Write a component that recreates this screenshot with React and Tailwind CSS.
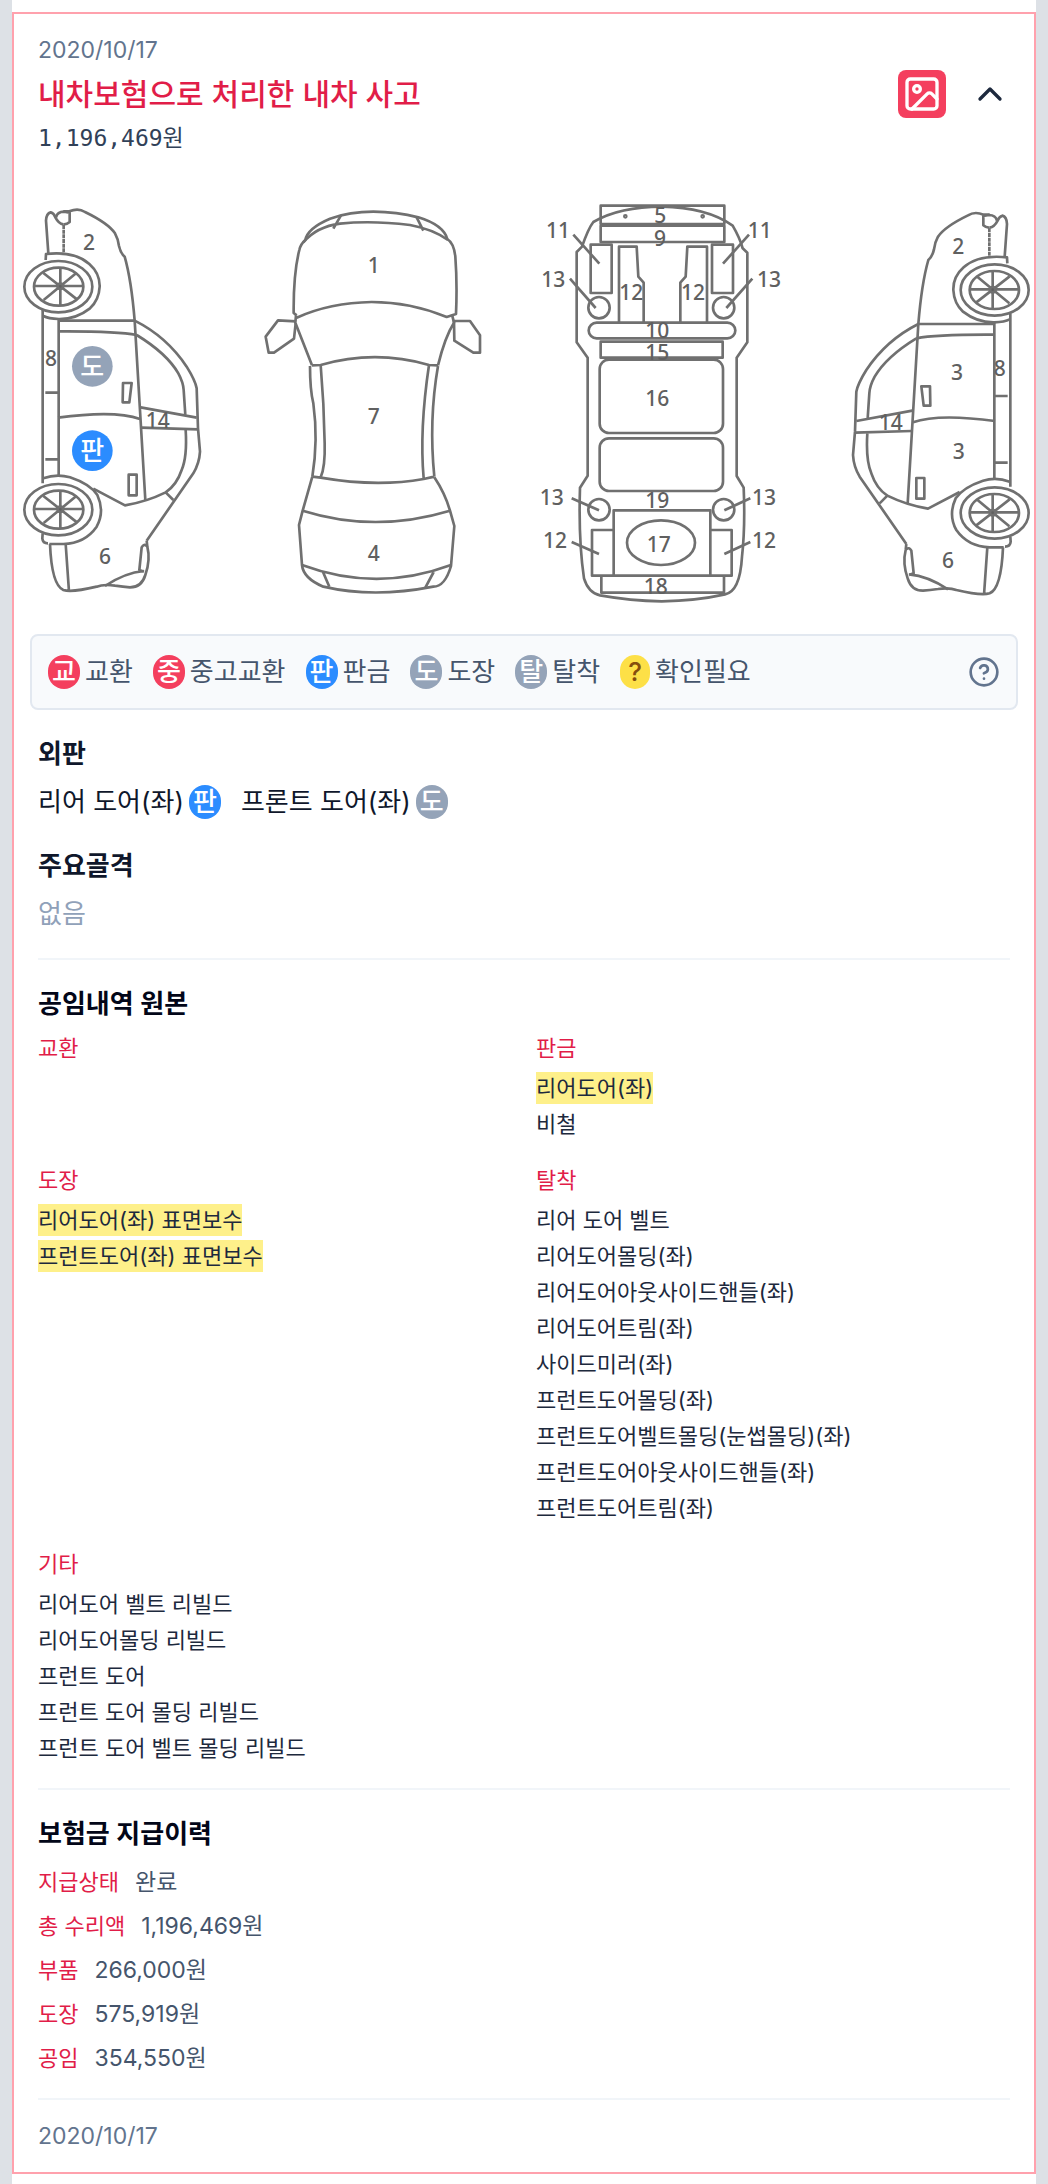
import { ChevronUp, CircleHelp, Image } from "lucide-react";

const legend = [
  ["교", "교환", "bg-[#f43f5e] text-white w-8"],
  ["중", "중고교환", "bg-[#f43f5e] text-white w-8"],
  ["판", "판금", "bg-[#2b8cff] text-white w-8"],
  ["도", "도장", "bg-[#94a3b8] text-white w-8"],
  ["탈", "탈착", "bg-[#94a3b8] text-white w-8"],
  ["?", "확인필요", "bg-[#fde047] text-[#854d0e] w-[30px]"],
];

const work = [
  { title: "교환", items: [] },
  { title: "판금", items: [["리어도어(좌)", true], ["비철"]] },
  { title: "도장", items: [["리어도어(좌) 표면보수", true], ["프런트도어(좌) 표면보수", true]] },
  {
    title: "탈착",
    items: [
      ["리어 도어 벨트"],
      ["리어도어몰딩(좌)"],
      ["리어도어아웃사이드핸들(좌)"],
      ["리어도어트림(좌)"],
      ["사이드미러(좌)"],
      ["프런트도어몰딩(좌)"],
      ["프런트도어벨트몰딩(눈썹몰딩)(좌)"],
      ["프런트도어아웃사이드핸들(좌)"],
      ["프런트도어트림(좌)"],
    ],
  },
  {
    title: "기타",
    items: [
      ["리어도어 벨트 리빌드"],
      ["리어도어몰딩 리빌드"],
      ["프런트 도어"],
      ["프런트 도어 몰딩 리빌드"],
      ["프런트 도어 벨트 몰딩 리빌드"],
    ],
  },
];

const payments = [
  ["지급상태", "완료"],
  ["총 수리액", "1,196,469원"],
  ["부품", "266,000원"],
  ["도장", "575,919원"],
  ["공임", "354,550원"],
];

function Badge({ children, tone }) {
  return (
    <span className={`inline-flex h-[34px] shrink-0 items-center justify-center rounded-full text-[26px] font-medium leading-[34px] ${tone}`}>
      {children}
    </span>
  );
}

function Labels({ items }) {
  return (
    <g fill="#606060" stroke="none" fontSize="63" fontWeight="500" textAnchor="middle" className="font-['Noto_Sans',sans-serif]">
      {items.map(([t, x, y], i) => (
        <text key={i} x={x} y={y}>{t}</text>
      ))}
    </g>
  );
}

function Wheel({ cy }) {
  return (
    <g>
      <ellipse cx="175" cy={cy} rx="102" ry="77" fill="#fff" />
      <ellipse cx="176" cy={cy} rx="74" ry="57" />
      <path d={`M102 ${cy - 2}H250M181 ${cy - 57}V${cy + 57}M130 ${cy - 41}L231 ${cy + 38}M229 ${cy - 41}L131 ${cy + 40}`} />
      <circle cx="181" cy={cy - 1} r="8" fill="#606060" />
    </g>
  );
}

function SideView() {
  return (
    <g>
      <path d="M145 190L138 92Q139 70 152 67Q162 70 166 82Q176 101 190 103" />
      <path d="M191 105V188" strokeDasharray="12 2" />
      <path d="M168 82Q172 65 192 65L209 68V96Q200 104 190 103" />
      <path d="M190 64L208 64Q235 53 255 66Q325 100 345 130Q355 148 357 168Q362 190 374 200Q394 270 404 392L436 930" />
      <path d="M137 210L138 192Q225 183 268 222Q300 250 299 290Q297 330 270 355Q228 388 176 387Q145 386 130 378" />
      <path d="M128 360V880M176 388V855M136 608H174M136 808H174" />
      <path d="M130 865Q170 850 210 862Q270 882 292 915Q315 965 290 1010Q255 1060 190 1062L148 1062M128 1030L127 1045Q128 1060 144 1060" />
      <Wheel cy={290} />
      <Wheel cy={959} />
      <path d="M176 392H404M176 424Q350 423 410 435M174 683Q345 660 420 687" />
      <path d="M404 392Q500 440 560 530Q586 572 590 595L594 715L600 785Q598 820 580 850L440 1052" />
      <path d="M410 435Q500 490 535 550Q550 578 551 600L556 675M422 652L590 683M424 713L594 718" />
      <path d="M557 720Q562 800 545 840Q530 885 497 907L520 930M497 907Q440 935 375 946L280 896" />
      <path d="M369 579H395L388 637H368ZM386 854H410V916H386Z" />
      <path d="M440 1052L442 1070Q452 1110 436 1155Q425 1192 390 1192Q370 1190 345 1187Q310 1182 290 1190Q215 1208 190 1200Q155 1185 150 1062M197 1062L207 1205" />
      <path d="M440 1068Q432 1060 425 1072L418 1140L432 1145M315 1188Q375 1148 432 1143" />
    </g>
  );
}

function TopView() {
  return (
    <g>
      <path d="M140 376L131 369Q130 250 148 180Q152 162 166 150Q172 115 240 86Q300 65 370 65Q440 66 505 82Q580 105 592 147Q612 160 616 200Q622 280 618 372L590 381Q480 336 365 336Q240 338 140 383" />
      <path d="M160 157Q200 110 270 101Q365 91 480 105Q550 118 594 150M273 76L250 116M500 82L520 122" />
      <path d="M138 376L136 398L186 526M606 374L612 398Q585 440 564 526M186 526L212 525Q375 478 537 525L564 526" />
      <path d="M138 394L84 391L47 440L56 488H72L132 446L137 400M612 393H660L690 436V488H670L613 452Z" />
      <path d="M180 528Q180 600 190 640Q205 750 187 860M212 525Q222 640 224 760Q226 830 212 862M564 528Q536 690 553 860M537 525Q508 720 521 865M187 860L212 863Q380 892 521 867L553 860" />
      <path d="M187 860L158 962L147 1005L156 1125Q160 1165 220 1190Q370 1225 550 1190Q585 1190 603 1128L613 1008L600 962Q585 910 553 862" />
      <path d="M158 962Q375 1030 600 962M156 1125Q380 1208 603 1125M219 1146L238 1190M551 1146L526 1193" />
      <Labels items={[["1", 371, 249], ["7", 371, 703], ["4", 371, 1113]]} />
    </g>
  );
}

function UnderView() {
  return (
    <g>
      <path d="M242 47H613V102H242ZM242 107H613V156H242ZM242 455H608V503H242Z" />
      <path d="M170 186L186 170Q205 115 220 96Q300 50 425 50Q560 52 638 107Q660 145 668 175L682 188V457L650 503V858L671 893Q676 1010 666 1100Q660 1205 615 1213Q530 1232 425 1234Q330 1232 240 1216Q205 1208 192 1165Q175 1050 180 893L203 857V503L170 457Z" />
      <path d="M212 164H275V309H212ZM576 164H639V309H576ZM297 398V170H350L355 260L371 278V398M481 398V278L497 260L502 170H561V398" />
      <circle cx="237" cy="353" r="32" />
      <circle cx="611" cy="353" r="32" />
      <circle cx="237" cy="959" r="32" />
      <circle cx="611" cy="959" r="32" />
      <rect x="206" y="398" width="440" height="47" rx="24" />
      <rect x="239" y="509" width="370" height="220" rx="28" />
      <rect x="239" y="745" width="370" height="158" rx="28" />
      <path d="M281 961H571V1157H281ZM281 1020H216V1157H281M571 1020H635V1157H571M244 1157V1208H612V1157" />
      <ellipse cx="423" cy="1058" rx="102" ry="67" />
      <path d="M160 134L238 221M687 134L609 221M150 266L227 354M697 266L619 354M155 925L237 961M691 925L613 961M155 1056L237 1092M691 1056L613 1092" />
      <circle cx="316" cy="79" r="3" />
      <circle cx="548" cy="79" r="3" />
      <Labels
        items={[
          ["5", 421, 99], ["9", 420, 168], ["11", 114, 144], ["11", 719, 144], ["13", 100, 291], ["13", 747, 291],
          ["12", 334, 329], ["12", 519, 329], ["10", 412, 444], ["15", 412, 510], ["16", 412, 649], ["19", 412, 955],
          ["17", 416, 1087], ["13", 95, 944], ["13", 732, 944], ["12", 105, 1075], ["12", 732, 1075], ["18", 407, 1212],
        ]}
      />
    </g>
  );
}

function CarDiagram() {
  return (
    <svg viewBox="42 0 3060 1260" className="block w-full" role="img" aria-label="차량 부위별 수리 내역" fill="none" stroke="#707070" strokeWidth="8" strokeLinejoin="round">
      <SideView />
      <Labels items={[["2", 267, 181], ["8", 153, 528], ["14", 473, 713], ["6", 315, 1123]]} />
      <g transform="translate(750 0)"><TopView /></g>
      <g transform="translate(1560 0)"><UnderView /></g>
      <g transform="translate(3159 10) scale(-1 1)"><SideView /></g>
      <g transform="translate(2400 0)">
        <Labels items={[["2", 475, 192], ["3", 471, 570], ["8", 599, 558], ["14", 272, 721], ["3", 476, 806], ["6", 444, 1133]]} />
      </g>
      <g stroke="none" fontSize="78" fontWeight="500" textAnchor="middle">
        <circle cx="277" cy="529" r="61" fill="#94a3b8" />
        <text x="277" y="558" fill="#fff">도</text>
        <circle cx="277" cy="782" r="61" fill="#2b8cff" />
        <text x="277" y="811" fill="#fff">판</text>
      </g>
    </svg>
  );
}

export default function App() {
  return (
    <div className="bg-[#dde1e6] px-3 font-['Inter','Noto_Sans_CJK_KR',sans-serif]">
      <main className="bg-white pt-3 pb-[10px]">
        <article className="border-2 border-[#ffa1ad]">
          <header className="flex items-center justify-between px-6 pt-[14px]">
            <div>
              <p className="text-[23px] leading-[44px] text-slate-500">2020/10/17</p>
              <h2 className="text-[30px] font-medium leading-[44px] text-[#e11d48]">내차보험으로 처리한 내차 사고</h2>
              <p className="font-['DejaVu_Sans_Mono','Noto_Sans_CJK_KR',monospace] text-[23px] leading-[44px] text-slate-700">1,196,469원</p>
            </div>
            <div className="flex items-center gap-6">
              <button type="button" aria-label="사진 보기" className="flex size-12 items-center justify-center rounded-lg bg-[#f43f5e] text-white">
                <Image size={40} />
              </button>
              <button type="button" aria-label="접기" className="text-slate-800">
                <ChevronUp size={40} />
              </button>
            </div>
          </header>

          <div className="pt-[30px]">
            <CarDiagram />
          </div>

          <div className="mx-4 mt-6 flex items-center justify-between rounded-lg border-2 border-slate-200 bg-slate-50 px-4 py-[19px]">
            <ul className="flex flex-wrap gap-5">
              {legend.map(([mark, name, tone]) => (
                <li key={mark} className="flex items-center gap-[5px] text-[26px] leading-[34px] text-slate-600">
                  <Badge tone={tone}>{mark}</Badge>
                  {name}
                </li>
              ))}
            </ul>
            <button type="button" aria-label="도움말" className="text-slate-500">
              <CircleHelp size={32} />
            </button>
          </div>

          <div className="px-6">
            <section className="border-b-2 border-slate-100 pt-5 pb-5 text-[26px] text-slate-900">
              <h3 className="font-bold leading-[48px]">외판</h3>
              <ul className="flex flex-wrap gap-5 leading-[48px]">
                <li className="flex items-center gap-[5px]">리어 도어(좌)<Badge tone="bg-[#2b8cff] text-white w-8">판</Badge></li>
                <li className="flex items-center gap-[5px]">프론트 도어(좌)<Badge tone="bg-[#94a3b8] text-white w-8">도</Badge></li>
              </ul>
              <h3 className="mt-4 font-bold leading-[48px]">주요골격</h3>
              <p className="leading-[48px] text-slate-400">없음</p>
            </section>

            <section className="border-b-2 border-slate-100 pt-5 pb-[22px]">
              <h3 className="text-[26px] font-semibold leading-[48px] text-slate-950">공임내역 원본</h3>
              <div className="mt-[2px] grid grid-cols-2 gap-x-6 gap-y-5">
                {work.map(({ title, items }) => (
                  <div key={title}>
                    <h4 className="text-[22px] leading-9 text-[#e11d48]">{title}</h4>
                    <ul className="mt-1 text-[22px] leading-9 text-slate-800">
                      {items.map(([name, marked]) => (
                        <li key={name} className="flex h-9 items-center">
                          {marked ? <mark className="bg-[#fef08a] leading-8 text-slate-800">{name}</mark> : name}
                        </li>
                      ))}
                    </ul>
                  </div>
                ))}
              </div>
            </section>

            <section className="border-b-2 border-slate-100 pt-5 pb-[18px]">
              <h3 className="text-[26px] font-semibold leading-[48px] text-slate-950">보험금 지급이력</h3>
              <dl className="mt-[2px] text-[22px] leading-[44px]">
                {payments.map(([k, v]) => (
                  <div key={k} className="flex gap-4">
                    <dt className="text-[#e11d48]">{k}</dt>
                    <dd className="text-[23px] text-slate-600">{v}</dd>
                  </div>
                ))}
              </dl>
            </section>

            <p className="py-[14px] text-[23px] leading-[44px] text-slate-500">2020/10/17</p>
          </div>
        </article>
      </main>
    </div>
  );
}
